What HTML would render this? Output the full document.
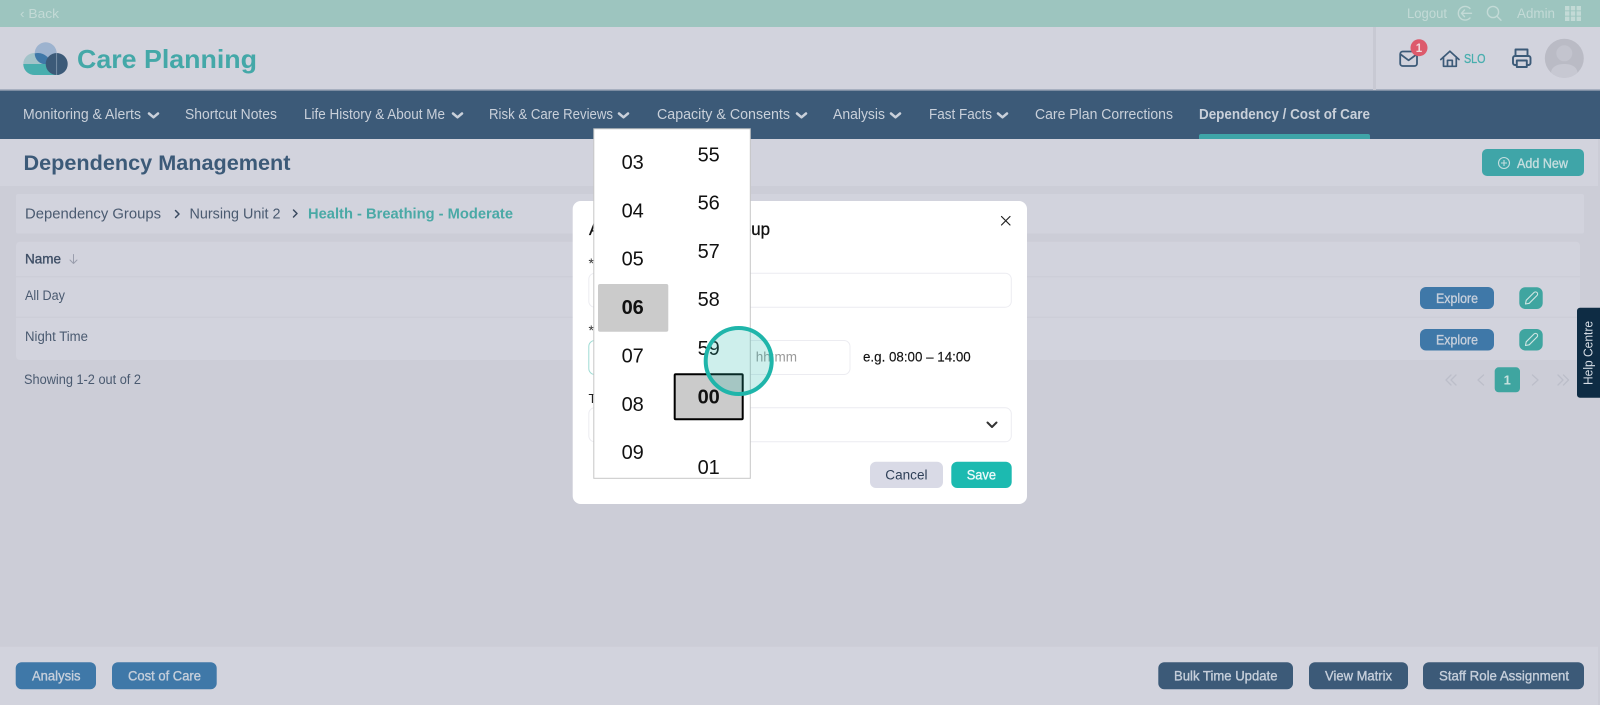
<!DOCTYPE html>
<html lang="en"><head><meta charset="utf-8"><title>Dependency Management</title>
<style>
html,body{margin:0;padding:0;width:1600px;height:705px;overflow:hidden;background:#cccdd7}
svg{display:block;font-family:"Liberation Sans",sans-serif}
.n{font-size:14.5px;fill:#c9d0da}
.b{font-weight:700}
.bt{font-size:14px;fill:#c6cfdb;stroke:#c6cfdb;stroke-width:.35px}
.g{font-size:20px;fill:#111;text-anchor:middle}
.ic{fill:none;stroke-linecap:round;stroke-linejoin:round}
</style></head><body>
<svg width="1600" height="705" viewBox="0 0 1600 705" xmlns="http://www.w3.org/2000/svg">
<defs><clipPath id="dd"><rect x="594" y="129" width="156" height="349"/></clipPath>
<clipPath id="tc"><circle cx="45.700" cy="53.300" r="11"/></clipPath></defs>
<rect width="1600" height="705" fill="#cccdd7"/>
<!-- top bar -->
<rect width="1600" height="27" fill="#9dc5bf"/>
<text x="20" y="18" font-size="13" fill="#c3dad6" textLength="39" lengthAdjust="spacingAndGlyphs">‹ Back</text>
<text x="1407" y="18" font-size="13.5" fill="#c3dad6" textLength="40" lengthAdjust="spacingAndGlyphs">Logout</text>
<g class="ic" stroke="#c3dad6" stroke-width="1.4"><path d="M1470 8.500a6.800 6.800 0 1 0 0 9.500"/><path d="M1471.500 13.300h-10M1464.500 10l-3 3.300 3 3.300"/><circle cx="1493" cy="12" r="5.600"/><path d="M1497 16.300l4 4"/></g>
<text x="1517" y="18" font-size="13.5" fill="#c3dad6" textLength="38" lengthAdjust="spacingAndGlyphs">Admin</text>
<g fill="#c3dad6"><rect x="1565" y="6" width="4.400" height="4.400"/><rect x="1570.800" y="6" width="4.400" height="4.400"/><rect x="1576.600" y="6" width="4.400" height="4.400"/><rect x="1565" y="11.300" width="4.400" height="4.400"/><rect x="1570.800" y="11.300" width="4.400" height="4.400"/><rect x="1576.600" y="11.300" width="4.400" height="4.400"/><rect x="1565" y="16.600" width="4.400" height="4.400"/><rect x="1570.800" y="16.600" width="4.400" height="4.400"/><rect x="1576.600" y="16.600" width="4.400" height="4.400"/></g>
<!-- header -->
<rect y="27" width="1600" height="63" fill="#d2d3dd"/>
<rect y="89.500" width="1600" height="1.500" fill="#7d8da2"/>
<rect x="1373" y="27" width="3" height="63" fill="#c8c9d3"/>
<!-- logo -->
<circle cx="34.300" cy="64" r="11" fill="#a3c3c9"/>
<rect x="34" y="55" width="20" height="10" fill="#a3c3c9"/>
<circle cx="45.700" cy="53.300" r="11" fill="#9db3cf"/>
<circle cx="38" cy="66" r="13" fill="#3f78a8" clip-path="url(#tc)"/>
<path d="M23.300 64h36v11h-25a11 11 0 0 1-11-11z" fill="#48aeae"/>
<circle cx="56.700" cy="64" r="11" fill="#3c5a78"/>
<path d="M56.700 53v22" stroke="#8fa3b8" stroke-width=".7"/>
<text x="77" y="68" font-size="26" class="b" fill="#44a8a8" textLength="180" lengthAdjust="spacingAndGlyphs">Care Planning</text>
<g class="ic" stroke="#3c5a78" stroke-width="1.800"><rect x="1400.200" y="51.500" width="16.800" height="14.500" rx="2.500"/><path d="M1400.800 54.500l7.800 5.800 7.800-5.800"/></g>
<g class="ic" stroke="#3c5a78" stroke-width="1.700"><path d="M1440.800 59.500l9.100-8.300 9.100 8.300M1443.500 56.800v9.500h12.800v-9.500M1447.500 66.300v-6h4.800v6"/></g>
<circle cx="1419" cy="47.700" r="8.500" fill="#dd5a6c"/>
<text x="1419" y="52" font-size="11.500" class="b" fill="#f2d9dd" text-anchor="middle">1</text>
<text x="1464" y="63" font-size="12.500" fill="#48aeae" stroke="#48aeae" stroke-width=".3" textLength="21.500" lengthAdjust="spacingAndGlyphs">SLO</text>
<g class="ic" stroke="#3c5a78" stroke-width="1.900"><path d="M1515.500 56v-6.500h12V56"/><rect x="1513" y="56" width="17.500" height="9" rx="2"/><rect x="1516.800" y="60.500" width="10" height="6.500" fill="#d2d3dd"/></g>
<circle cx="1564.300" cy="58.300" r="19.500" fill="#babbc5"/>
<circle cx="1564.300" cy="53.300" r="8" fill="#c3c4ce"/>
<path d="M1551 72.500c1-6.500 7-8.500 13.300-8.500s12.300 2 13.300 8.500a19 19 0 0 1-26.600 0z" fill="#c7c8d2"/>
<!-- nav -->
<rect y="91" width="1600" height="48" fill="#3c5a78"/>
<text class="n" x="23" y="119" textLength="118" lengthAdjust="spacingAndGlyphs">Monitoring &amp; Alerts</text>
<text class="n" x="185" y="119" textLength="92" lengthAdjust="spacingAndGlyphs">Shortcut Notes</text>
<text class="n" x="304" y="119" textLength="141" lengthAdjust="spacingAndGlyphs">Life History &amp; About Me</text>
<text class="n" x="489" y="119" textLength="124" lengthAdjust="spacingAndGlyphs">Risk &amp; Care Reviews</text>
<text class="n" x="657" y="119" textLength="133" lengthAdjust="spacingAndGlyphs">Capacity &amp; Consents</text>
<text class="n" x="833" y="119" textLength="52" lengthAdjust="spacingAndGlyphs">Analysis</text>
<text class="n" x="929" y="119" textLength="63" lengthAdjust="spacingAndGlyphs">Fast Facts</text>
<text class="n" x="1035" y="119" textLength="138" lengthAdjust="spacingAndGlyphs">Care Plan Corrections</text>
<text class="n b" x="1199" y="119" textLength="171" lengthAdjust="spacingAndGlyphs">Dependency / Cost of Care</text>
<g class="ic" stroke="#c9d0da" stroke-width="2.500"><path d="M149 113.500l4.500 3.800 4.500-3.800M453 113.500l4.500 3.800 4.500-3.800M619 113.500l4.500 3.800 4.500-3.800M797 113.500l4.500 3.800 4.500-3.800M891 113.500l4.500 3.800 4.500-3.800M998 113.500l4.500 3.800 4.500-3.800"/></g>
<path d="M1199 139v-3a2 2 0 0 1 2-2h167a2 2 0 0 1 2 2v3z" fill="#3fa5a8"/>
<!-- title band -->
<rect y="139" width="1598" height="47" fill="#d2d3dd"/>
<text x="23.500" y="170" font-size="21" class="b" fill="#3c5a78" textLength="267" lengthAdjust="spacingAndGlyphs">Dependency Management</text>
<rect x="1482" y="149" width="102" height="27" rx="5" fill="#3fa5a8"/>
<circle cx="1504" cy="163" r="5.500" fill="none" stroke="#c5dedf" stroke-width="1.100"/>
<path d="M1504 160v6M1501 163h6" stroke="#c5dedf" stroke-width="1.100"/>
<text x="1517" y="168" font-size="14" fill="#c5dedf" stroke="#c5dedf" stroke-width=".35" textLength="51" lengthAdjust="spacingAndGlyphs">Add New</text>
<!-- breadcrumb -->
<rect x="16" y="194" width="1568" height="39.500" rx="2" fill="#d2d3dd"/>
<text x="25" y="218.500" font-size="14.500" fill="#4a5a70" textLength="136" lengthAdjust="spacingAndGlyphs">Dependency Groups</text>
<path d="M175.500 210.500l3.500 3.500-3.500 3.500" class="ic" stroke="#3a4a60" stroke-width="1.500"/>
<text x="189.500" y="218.500" font-size="14.500" fill="#4a5a70" textLength="91" lengthAdjust="spacingAndGlyphs">Nursing Unit 2</text>
<path d="M293.500 210l3.500 3.500-3.500 3.500" class="ic" stroke="#3a4a60" stroke-width="1.500"/>
<text x="308" y="218.500" font-size="14.500" class="b" fill="#4aa9a6" textLength="205" lengthAdjust="spacingAndGlyphs">Health - Breathing - Moderate</text>
<!-- table -->
<rect x="16" y="241.700" width="1564" height="118.300" rx="4" fill="#d2d3dd"/>
<path d="M16 276.700h1564M16 317.300h1564" stroke="#cbccd6"/>
<text x="25" y="263.300" font-size="13.500" fill="#3f4f66" stroke="#3f4f66" stroke-width=".35" textLength="36" lengthAdjust="spacingAndGlyphs">Name</text>
<path d="M73.500 254.500v9M70 260l3.500 3.500 3.500-3.500" class="ic" stroke="#9a9ead" stroke-width="1"/>
<text x="25" y="300" font-size="13.500" fill="#4a5a70" textLength="40" lengthAdjust="spacingAndGlyphs">All Day</text>
<text x="25" y="341" font-size="13.500" fill="#4a5a70" textLength="63" lengthAdjust="spacingAndGlyphs">Night Time</text>
<text x="24" y="384" font-size="13.500" fill="#4a5a70" textLength="117" lengthAdjust="spacingAndGlyphs">Showing 1-2 out of 2</text>
<rect x="1420" y="287" width="74" height="22" rx="6" fill="#3f78a8"/>
<text x="1436" y="303" font-size="14" fill="#c6cfdb" stroke="#c6cfdb" stroke-width=".35" textLength="42" lengthAdjust="spacingAndGlyphs">Explore</text>
<rect x="1420" y="329" width="74" height="21.500" rx="6" fill="#3f78a8"/>
<text x="1436" y="344.500" font-size="14" fill="#c6cfdb" stroke="#c6cfdb" stroke-width=".35" textLength="42" lengthAdjust="spacingAndGlyphs">Explore</text>
<rect x="1519.300" y="287.300" width="23.400" height="21.700" rx="6" fill="#3fa5a0"/>
<rect x="1519.300" y="329" width="23.400" height="21.500" rx="6" fill="#3fa5a0"/>
<g class="ic" stroke="#d0e6e3" stroke-width="1.100"><path d="M1525.500 304l.7-3.700 7.800-7.800a2.100 2.100 0 0 1 3 3l-7.800 7.800z"/><path d="M1525.500 345.500l.7-3.700 7.800-7.800a2.100 2.100 0 0 1 3 3l-7.800 7.800z"/></g>
<g class="ic" stroke="#bcbec9" stroke-width="1.300"><path d="M1451 375l-5 5 5 5M1456 375l-5 5 5 5M1483.500 375l-5.500 5 5.500 5M1532.500 375l5.500 5-5.500 5M1558 375l5 5-5 5M1563.500 375l5 5-5 5"/></g>
<rect x="1494.700" y="367.300" width="25.300" height="25" rx="4" fill="#3fa5a0"/>
<text x="1507.300" y="384.500" font-size="13" class="b" fill="#c9e2df" text-anchor="middle">1</text>
<path d="M1600 307.700h-20a3 3 0 0 0-3 3v84a3 3 0 0 0 3 3h20z" fill="#0e2c44"/>
<text transform="translate(1592.700 385) rotate(-90)" font-size="13" fill="#d6dde5" textLength="64" lengthAdjust="spacingAndGlyphs">Help Centre</text>
<!-- bottom bar -->
<rect y="646.700" width="1598" height="58.300" fill="#d2d3dd"/>
<rect x="15.700" y="662.300" width="80.300" height="27" rx="6" fill="#3f78a8"/>
<text class="bt" x="32" y="680.500" textLength="48.500" lengthAdjust="spacingAndGlyphs">Analysis</text>
<rect x="112" y="662.300" width="104.700" height="27" rx="6" fill="#3f78a8"/>
<text class="bt" x="128" y="680.500" textLength="73" lengthAdjust="spacingAndGlyphs">Cost of Care</text>
<rect x="1158.300" y="662.300" width="134.700" height="27" rx="6" fill="#3c5a78"/>
<text class="bt" x="1174" y="680.500" textLength="103.500" lengthAdjust="spacingAndGlyphs">Bulk Time Update</text>
<rect x="1309" y="662.300" width="99" height="27" rx="6" fill="#3c5a78"/>
<text class="bt" x="1325" y="680.500" textLength="67" lengthAdjust="spacingAndGlyphs">View Matrix</text>
<rect x="1423" y="662.300" width="161" height="27" rx="6" fill="#3c5a78"/>
<text class="bt" x="1439" y="680.500" textLength="130" lengthAdjust="spacingAndGlyphs">Staff Role Assignment</text>
<!-- modal -->
<rect x="572.700" y="201" width="454.300" height="303" rx="8" fill="#fff"/>
<text x="589" y="235" font-size="17.500" fill="#111" stroke="#111" stroke-width=".3" textLength="181" lengthAdjust="spacingAndGlyphs">Add Dependency Group</text>
<path d="M1001.500 216.500l8.500 8.500M1010 216.500l-8.500 8.500" class="ic" stroke="#222" stroke-width="1.200"/>
<text x="588.500" y="268" font-size="14" fill="#333">*</text>
<text x="588.500" y="335" font-size="14" fill="#333">*</text>
<text x="588.500" y="403" font-size="13" fill="#222">T</text>
<rect x="588.800" y="273.200" width="422.500" height="34" rx="6" fill="#fff" stroke="#ececf1"/>
<rect x="588.800" y="340.500" width="60" height="34" rx="6" fill="#fff" stroke="#9fdcd4"/>
<rect x="720" y="340.500" width="130" height="34" rx="6" fill="#fff" stroke="#ececf1"/>
<text x="755.700" y="361.700" font-size="13.500" fill="#9a9a9a" textLength="41.300" lengthAdjust="spacingAndGlyphs">hh:mm</text>
<text x="863" y="361.700" font-size="13.500" fill="#111" stroke="#111" stroke-width=".15" textLength="107.700" lengthAdjust="spacingAndGlyphs">e.g. 08:00 – 14:00</text>
<rect x="588.800" y="407.800" width="422.500" height="34" rx="6" fill="#fff" stroke="#ececf1"/>
<path d="M987.500 422.500l4.500 4.500 4.500-4.500" class="ic" stroke="#333" stroke-width="2"/>
<rect x="870" y="461.700" width="73" height="26.300" rx="6" fill="#d9dae6"/>
<text x="885.300" y="479.300" font-size="13.500" fill="#2f4058" textLength="42.200" lengthAdjust="spacingAndGlyphs">Cancel</text>
<rect x="951.300" y="461.700" width="60.400" height="26.300" rx="6" fill="#1cbab0"/>
<text x="966.700" y="479.300" font-size="13.500" fill="#eafafa" stroke="#eafafa" stroke-width=".35" textLength="29.300" lengthAdjust="spacingAndGlyphs">Save</text>
<!-- time dropdown -->
<rect x="593.800" y="128.800" width="156.500" height="349.500" fill="#fff" stroke="#c6c6c6"/>
<rect x="598" y="284" width="70.300" height="47.700" rx="2" fill="#cbcbcb"/>
<rect x="674.700" y="374.300" width="68" height="45" rx="1" fill="#cbcbcb" stroke="#000" stroke-width="2"/>
<g clip-path="url(#dd)">
<text class="g" x="632.700" y="169">03</text>
<text class="g" x="632.700" y="217.700">04</text>
<text class="g" x="632.700" y="265.700">05</text>
<text class="g b" x="632.700" y="314">06</text>
<text class="g" x="632.700" y="362.300">07</text>
<text class="g" x="632.700" y="411">08</text>
<text class="g" x="632.700" y="459">09</text>
<text class="g" x="708.700" y="161.700">55</text>
<text class="g" x="708.700" y="209.700">56</text>
<text class="g" x="708.700" y="258">57</text>
<text class="g" x="708.700" y="306">58</text>
<text class="g" x="708.700" y="355">59</text>
<text class="g b" x="708.700" y="403.300">00</text>
<text class="g" x="708.700" y="474">01</text>
</g>
<!-- click indicator -->
<circle cx="738.700" cy="361" r="33" fill="#1eb5aa" fill-opacity=".22" stroke="#1fb5aa" stroke-width="4"/>
</svg>
</body></html>
